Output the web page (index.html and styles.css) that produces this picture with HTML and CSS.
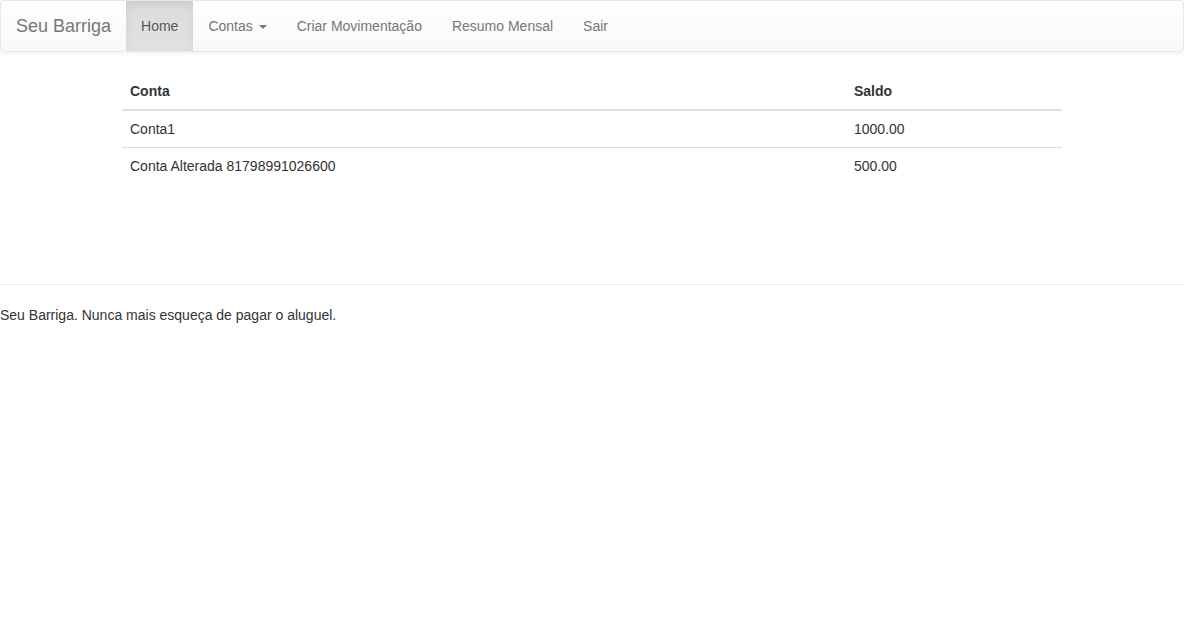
FILE: index.html
```html
<!DOCTYPE html>
<html lang="pt">
<head>
<meta charset="utf-8">
<title>Seu Barriga</title>
<link rel="stylesheet" href="styles.css">
</head>
<body>
<nav class="navbar">
  <a class="brand" href="#">Seu Barriga</a>
  <ul class="nav">
    <li class="active"><a href="#">Home</a></li>
    <li><a href="#">Contas <span class="caret"></span></a></li>
    <li><a href="#">Criar Movimentação</a></li>
    <li><a href="#">Resumo Mensal</a></li>
    <li><a href="#">Sair</a></li>
  </ul>
</nav>
<div class="container">
  <table class="table">
    <thead>
      <tr><th class="col-conta">Conta</th><th>Saldo</th></tr>
    </thead>
    <tbody>
      <tr><td>Conta1</td><td>1000.00</td></tr>
      <tr><td>Conta Alterada 81798991026600</td><td>500.00</td></tr>
    </tbody>
  </table>
</div>
<hr class="divider">
<footer class="footer">Seu Barriga. Nunca mais esqueça de pagar o aluguel.</footer>
</body>
</html>
```

FILE: styles.css
```css
* { box-sizing: border-box; }
html, body { margin: 0; padding: 0; }
body {
  font-family: "Liberation Sans", Arial, Helvetica, sans-serif;
  font-size: 14px;
  line-height: 20px;
  color: #333;
  background: #fff;
}
a { text-decoration: none; }

.navbar {
  display: flex;
  align-items: stretch;
  height: 52px;
  border: 1px solid #e7e7e7;
  border-radius: 4px;
  background-color: #f8f8f8;
  background-image: linear-gradient(to bottom, #fff 0, #f8f8f8 100%);
  box-shadow: inset 0 1px 0 rgba(255,255,255,.15), 0 1px 5px rgba(0,0,0,.075);
  margin-bottom: 21px;
}
.brand {
  padding: 15px;
  font-size: 18px;
  line-height: 20px;
  height: 50px;
  color: #777;
  text-shadow: 0 1px 0 rgba(255,255,255,.25);
}
.nav {
  display: flex;
  list-style: none;
  margin: 0;
  padding: 0;
}
.nav li a {
  display: block;
  padding: 15px;
  line-height: 20px;
  height: 50px;
  color: #777;
  text-shadow: 0 1px 0 rgba(255,255,255,.25);
}
.nav li.active a {
  color: #555;
  background-image: linear-gradient(to bottom, #dbdbdb 0, #e2e2e2 100%);
  box-shadow: inset 0 3px 9px rgba(0,0,0,.075);
}
.caret {
  display: inline-block;
  width: 0;
  height: 0;
  margin-left: 2px;
  vertical-align: middle;
  border-top: 4px solid;
  border-right: 4px solid transparent;
  border-left: 4px solid transparent;
}

.container {
  width: 970px;
  padding: 0 15px;
  margin: 0 auto;
}
.table {
  width: 100%;
  border-collapse: collapse;
  border-spacing: 0;
  margin-bottom: 20px;
}
.table th, .table td {
  padding: 8px;
  line-height: 20px;
  text-align: left;
  vertical-align: top;
}
.table th {
  font-weight: bold;
  border-bottom: 2px solid #ddd;
}
.table td { border-top: 1px solid #ddd; }
.col-conta { width: 724px; }

.divider {
  margin: 100px 0 20px;
  border: 0;
  border-top: 1px solid #eee;
  height: 0;
}
.footer { padding: 0; }
```
